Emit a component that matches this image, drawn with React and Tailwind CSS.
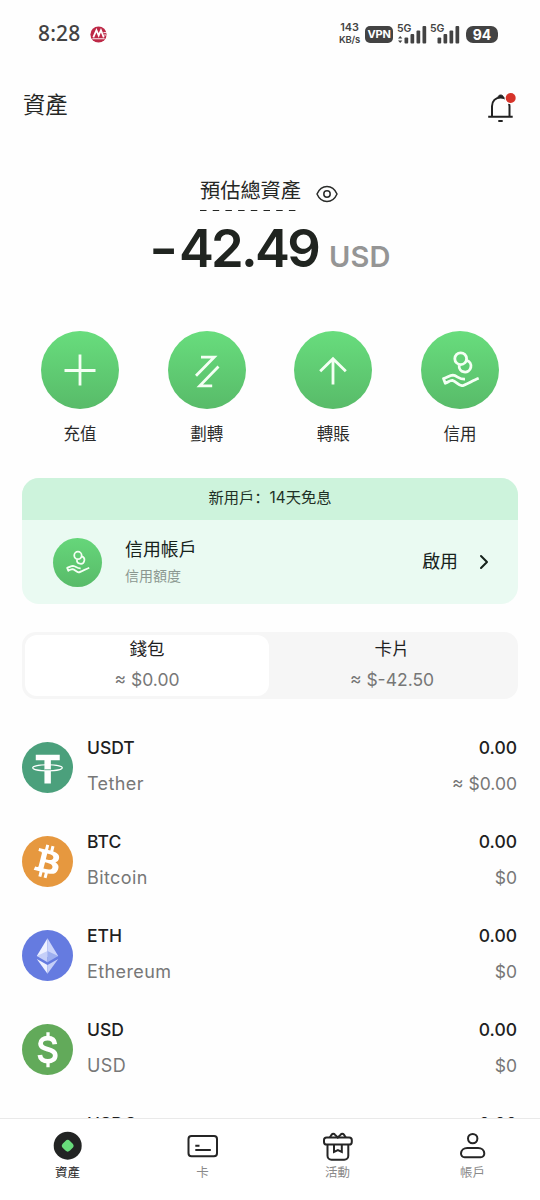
import { ChevronRight } from 'lucide-react'

const actions = [
  { label: '充值', icon: PlusIcon },
  { label: '劃轉', icon: TransferIcon },
  { label: '轉賬', icon: ArrowUpIcon },
  { label: '信用', icon: CreditIcon }
]

const assets = [
  { symbol: 'USDT', name: 'Tether', amount: '0.00', value: '≈ $0.00', icon: UsdtIcon },
  { symbol: 'BTC', name: 'Bitcoin', amount: '0.00', value: '$0', icon: BtcIcon },
  { symbol: 'ETH', name: 'Ethereum', amount: '0.00', value: '$0', icon: EthIcon },
  { symbol: 'USD', name: 'USD', amount: '0.00', value: '$0', icon: UsdIcon },
  { symbol: 'USDC', amount: '0.00', icon: UsdcIcon }
]

const navItems = [
  { label: '資產', icon: AssetsIcon, active: true },
  { label: '卡', icon: CardIcon },
  { label: '活動', icon: GiftIcon },
  { label: '帳戶', icon: UserIcon }
]

function PlusIcon() {
  return (
    <svg viewBox="0 0 78 78" className="size-full" fill="none" stroke="#f4fff4" strokeWidth="2.8">
      <path d="M39 23.5v31M23.5 39.5h31" />
    </svg>
  )
}

function TransferIcon() {
  return (
    <svg viewBox="0 0 78 78" className="size-full" fill="none" stroke="#f4fff4" strokeWidth="2.8">
      <path d="M33 26.2h13.2L28 44.700M50.500 35.600L31.800 54.800h12.400" />
    </svg>
  )
}

function ArrowUpIcon() {
  return (
    <svg viewBox="0 0 78 78" className="size-full" fill="none" stroke="#f4fff4" strokeWidth="2.8">
      <path d="M39 53.500V28M26.200 40.300L39 27.700l12.800 12.600" />
    </svg>
  )
}

function CreditIcon() {
  return (
    <svg viewBox="0 0 78 78" className="size-full" fill="none" stroke="#f4fff4" strokeWidth="2.8" strokeLinejoin="round">
      <circle cx="39.700" cy="27.700" r="5.900" />
      <path d="M45.600 29.400a5.900 5.900 0 1 1-7.400 4.900" />
      <path d="M44 48.200c-6.200.4-7.600-3.700-12.200-4-3 0-6 2.400-9.300 3.300l1.800 4.700c3-1 4.500-3 7-2.800 3.500.8 6 4.600 9.600 5.300 2.600-.2 11-5.200 16.800-7.400" />
    </svg>
  )
}

function UsdtIcon() {
  return (
    <svg viewBox="0 0 50 50" className="size-full">
      <circle cx="25" cy="25" r="25" fill="#4ba07c" />
      <path d="M13.500 12.500h23.500v5.500h-8.700v22.800h-6.300V18h-8.500z" fill="#fff" />
      <ellipse cx="25" cy="25.300" rx="14.500" ry="3" fill="none" stroke="#fff" strokeWidth="1.200" />
      <path d="M22 27.200h6.300" stroke="#4ba07c" strokeWidth=".8" />
    </svg>
  )
}

function BtcIcon() {
  return (
    <svg viewBox="0 0 32 32" className="size-full">
      <circle cx="16" cy="16" r="16" fill="#e6983f" />
      <path
        fill="#fff"
        transform="translate(-1.300 -1) scale(1.06)"
        d="M23.189 14.020c.314-2.096-1.283-3.223-3.465-3.975l.708-2.840-1.728-.430-.690 2.765c-.454-.114-.920-.220-1.385-.326l.695-2.783L15.596 6l-.708 2.839c-.376-.086-.746-.170-1.104-.260l.002-.009-2.384-.595-.460 1.846s1.283.294 1.256.312c.700.175.826.638.805 1.006l-.806 3.235c.048.012.110.030.180.057l-.183-.045-1.130 4.532c-.086.212-.303.531-.793.410.018.025-1.256-.313-1.256-.313l-.858 1.978 2.250.561c.418.105.828.215 1.231.318l-.715 2.872 1.727.430.708-2.840c.472.127.930.245 1.378.357l-.706 2.828 1.728.430.715-2.866c2.948.558 5.164.333 6.097-2.333.752-2.146-.037-3.385-1.588-4.192 1.130-.260 1.980-1.003 2.207-2.538zm-3.950 5.538c-.533 2.147-4.148.986-5.320.695l.950-3.805c1.172.293 4.929.872 4.370 3.110zm.535-5.569c-.487 1.953-3.495.960-4.470.717l.860-3.450c.975.243 4.118.696 3.610 2.733z"
      />
    </svg>
  )
}

function EthIcon() {
  return (
    <svg viewBox="0 0 50 50" className="size-full">
      <circle cx="25" cy="25" r="25" fill="#657be0" />
      <path d="M25 8v18.500l-10.500-1z" fill="#eef1ff" />
      <path d="M25 8v18.500l10.500-1z" fill="#ccd5fb" />
      <path d="M25 20.700l-10.500 4.800L25 31.500z" fill="#c5cff8" />
      <path d="M25 20.700l10.500 4.800L25 31.500z" fill="#9daff0" />
      <path d="M14.500 28.500L25 34.300v8.500z" fill="#eef1ff" />
      <path d="M35.500 28.500L25 34.300v8.500z" fill="#c5cff8" />
    </svg>
  )
}

function UsdIcon() {
  return (
    <svg viewBox="0 0 50 50" className="size-full">
      <circle cx="25" cy="25" r="25" fill="#62aa5a" />
      <g fill="none" stroke="#fff">
        <path d="M32.200 19.800c-.4-4-3.200-5.900-7-5.900-4.100 0-7 2-7 5.200 0 3.700 3.200 4.600 7 5.700 4.200 1.200 7.400 2.300 7.400 6 0 3.600-3.200 5.700-7.300 5.700-4.200 0-7.400-2.200-7.800-6.200" strokeWidth="4.600" />
        <path d="M25.500 8v5M25.500 37v5.500" strokeWidth="3.200" />
      </g>
    </svg>
  )
}

function UsdcIcon() {
  return (
    <svg viewBox="0 0 50 50" className="size-full">
      <circle cx="25" cy="25" r="25" fill="#9a9a9e" />
    </svg>
  )
}

function AssetsIcon() {
  return (
    <svg viewBox="0 0 32 32" className="size-8">
      <circle cx="15.700" cy="15.700" r="14" fill="#222423" />
      <rect x="10.700" y="10.700" width="10" height="10" rx="3.200" fill="#68dc7b" transform="rotate(45 15.700 15.700)" />
    </svg>
  )
}

function CardIcon() {
  return (
    <svg viewBox="0 0 32 32" className="size-8" fill="none" stroke="#252525" strokeWidth="2">
      <rect x="1.500" y="6" width="28.500" height="20.200" rx="3" />
      <path d="M8.300 15.800h4.200M8.300 20h15.500" />
    </svg>
  )
}

function GiftIcon() {
  return (
    <svg viewBox="0 0 32 32" className="size-8" fill="none" stroke="#252525" strokeWidth="2">
      <rect x="2" y="7.500" width="27.800" height="7" rx="2.600" />
      <path d="M5.500 14.600v11.200a4 4 0 0 0 4 4h12.800a4 4 0 0 0 4-4V14.600" />
      <path d="M7.800 7.500l1.900-2.900c.9-1.300 2.300-1.300 3.200 0l2.900 2.900 2.900-2.900c.9-1.300 2.300-1.300 3.200 0l1.900 2.900" />
      <path d="M12 14.600v7.400l3.900-1.800 3.900 1.800v-7.400" />
    </svg>
  )
}

function UserIcon() {
  return (
    <svg viewBox="0 0 32 32" className="size-8" fill="none" stroke="#252525" strokeWidth="2">
      <circle cx="15.700" cy="8.600" r="4.700" />
      <path d="M10.300 18h10.800c3.500 0 6 2.400 6.200 5.400.1 2.100-1.500 3.900-3.600 3.900H7.600c-2.100 0-3.700-1.800-3.600-3.900.2-3 2.800-5.400 6.300-5.400z" />
    </svg>
  )
}

function SignalBars({ data }) {
  return (
    <svg viewBox="0 0 32 24" className="h-6 w-8" fill="#434343">
      <text x="0" y="9.600" fontSize="10.500" fontWeight="600" fontFamily="Inter, sans-serif">5G</text>
      {data && <path d="M1 16.500L3.200 14l2.200 2.500zM1 18.500L3.200 21l2.200-2.500z" />}
      <rect x="7.500" y="15.500" width="3.700" height="6" rx="1" />
      <rect x="13.500" y="12" width="3.700" height="9.500" rx="1" />
      <rect x="19.500" y="8.500" width="3.700" height="13" rx="1" />
      <rect x="25.500" y="4" width="3.700" height="17.500" rx="1" />
    </svg>
  )
}

function StatusBar() {
  return (
    <div className="flex h-[68px] shrink-0 items-center pl-[38px] pr-[42px] text-[#434343]">
      <span className="-mt-px text-[21px] font-medium tracking-[0.200px] font-['Noto_Sans','Liberation_Sans',sans-serif]">8:28</span>
      <svg viewBox="0 0 18 18" className="ml-[9px] size-[17px]">
        <circle cx="9" cy="9" r="8.600" fill="#bd2846" />
        <path d="M3.500 12L6.800 4.500 9.200 10l2.400-5.500 3 7.500" fill="none" stroke="#fff" strokeWidth="1.900" />
        <path d="M2.500 13.500h13M14.200 7H17.500M15 9.500h2.500" stroke="#fff" strokeWidth="1" />
      </svg>
      <div className="ml-auto flex items-center">
        <div className="w-[23px] text-center font-semibold leading-[12px]">
          <div className="text-[10.800px] tracking-[-0.100px]">143</div>
          <div className="text-[9.500px] tracking-[-0.200px]">KB/s</div>
        </div>
        <div className="ml-1 flex h-[17px] w-[28px] items-center justify-center rounded-[5px] bg-[#434343] text-[11px] font-bold leading-[17px] tracking-[-0.200px] text-white">
          VPN
        </div>
        <div className="ml-1 flex">
          <SignalBars data />
          <span className="ml-px flex">
            <SignalBars />
          </span>
        </div>
        <div className="ml-1 flex h-[17px] w-[32px] items-center justify-center rounded-[7px] bg-[#434343] text-[14px] font-bold leading-[17px] text-white">
          94
        </div>
      </div>
    </div>
  )
}

function Header() {
  return (
    <div className="flex h-[74px] shrink-0 items-center justify-between px-[23px]">
      <h1 className="text-[22.300px] leading-none text-[#252725]">資產</h1>
      <svg viewBox="0 0 32 32" className="size-8 overflow-visible" fill="none" stroke="#222" strokeWidth="2">
        <path d="M7 27.500V17.300c0-5.300 3.500-8.800 8.700-8.800s8.800 3.500 8.800 8.800v10.200" />
        <path d="M3.200 27.700h24.500M13.300 32h4.400" />
        <path d="M13 8.500c0-3.300 5.400-3.300 5.400 0z" fill="#222" strokeWidth="1" />
        <circle cx="25.700" cy="9" r="6.200" fill="#fefefe" stroke="none" />
        <circle cx="25.700" cy="9" r="5" fill="#d63329" stroke="none" />
      </svg>
    </div>
  )
}

function Balance() {
  return (
    <div className="flex h-[189px] shrink-0 flex-col items-center pt-[37px]">
      <div className="flex h-[34px] items-start pr-[2px]">
        <div className="w-[101px]">
          <div className="h-[31px] whitespace-nowrap text-[20.200px] leading-[24px] text-[#252725]">預估總資產</div>
          <svg viewBox="0 0 96 2" className="h-[2px] w-[96px]">
            <path d="M0 .5h96" stroke="#252725" strokeWidth="1.100" strokeDasharray="6.500 6.200" />
          </svg>
        </div>
        <svg viewBox="0 0 22 18" className="ml-[15px] mt-[6px] h-[18px] w-[22px]" fill="none" stroke="#2a2c2a" strokeWidth="1.500">
          <path d="M1 9c2.200-5 5.600-7.500 10-7.500S18.800 4 21 9c-2.200 5-5.600 7.500-10 7.500S3.200 14 1 9z" />
          <circle cx="11" cy="9" r="3.200" />
        </svg>
      </div>
      <div className="-mt-[3px] flex items-baseline leading-[76px]">
        <span className="text-[52.500px] font-semibold tracking-[-2.800px] text-[#202420]">
          <span className="mr-[8px] inline-block origin-left scale-x-120">-</span>42.49
        </span>
        <span className="ml-[11px] text-[29px] font-semibold tracking-[0.200px] text-[#959595]">USD</span>
      </div>
    </div>
  )
}

function Actions() {
  return (
    <div className="flex h-[147px] shrink-0 justify-between px-[41px]">
      {actions.map(({ label, icon: Icon }) => (
        <div key={label} className="flex w-[78px] flex-col items-center">
          <div className="size-[78px] rounded-full bg-linear-to-b from-[#68dd7d] to-[#58bb69]">
            <Icon />
          </div>
          <span className="mt-[13px] text-[16.500px] leading-6 text-[#2b2b2b]">{label}</span>
        </div>
      ))}
    </div>
  )
}

function CreditBanner() {
  return (
    <div className="mx-[22px] h-[126px] shrink-0 overflow-hidden rounded-[17px] bg-[#eafaf2]">
      <div className="flex h-[42px] items-center justify-center bg-[#cdf3dc] pb-px text-[15.300px] text-[#1e3026]">
        <span lang="zh-Hans" className="font-['Inter','Noto_Sans_CJK_SC',sans-serif]">新用戶：14天免息</span>
      </div>
      <div className="flex h-[84px] items-center pl-[31px] pr-[22px]">
        <div className="size-[49px] rounded-full bg-linear-to-b from-[#66d67a] to-[#58bb69]">
          <CreditIcon />
        </div>
        <div className="-mt-px ml-[23px]">
          <div className="text-[17.900px] leading-[28px] text-[#17221c]">信用帳戶</div>
          <div className="text-[14px] leading-[23px] text-[#8b9790]">信用額度</div>
        </div>
        <span className="ml-auto mt-px text-[17.900px] text-[#17221c]">啟用</span>
        <ChevronRight className="ml-[14px] size-[24px] text-[#17221c]" strokeWidth={2} />
      </div>
    </div>
  )
}

function WalletTabs() {
  return (
    <div className="mx-[22px] mt-[28px] flex h-[67px] shrink-0 rounded-[14px] bg-[#f6f6f6] p-[3px] text-center">
      <div className="w-[244px] rounded-[12px] bg-white">
        <div className="text-[17.500px] leading-[28px] text-[#1f1f1f]">錢包</div>
        <div className="text-[17.500px] leading-[33px] text-[#777]">≈ $0.00</div>
      </div>
      <div className="flex-1">
        <div className="text-[17.500px] leading-[28px] text-[#1f1f1f]">卡片</div>
        <div className="text-[17.500px] leading-[33px] text-[#777]">≈ $-42.50</div>
      </div>
    </div>
  )
}

function AssetList() {
  return (
    <div className="min-h-0 flex-1 overflow-hidden pl-[22px] pr-[23px] pt-[22px]">
      {assets.map(({ symbol, name, amount, value, icon: Icon }) => (
        <div key={symbol} className="flex h-[93.800px] items-center">
          <div className="size-[51px]">
            <Icon />
          </div>
          <div className="-mt-[3px] ml-[14px]">
            <div className="h-9 text-[17.500px] font-medium leading-[36px] text-[#1f1f1f]">{symbol}</div>
            <div className="h-9 text-[18px] leading-[36px] tracking-[0.400px] text-[#777]">{name}</div>
          </div>
          <div className="-mt-[3px] ml-auto text-right">
            <div className="h-9 text-[17.500px] font-medium leading-[36px] text-[#1f1f1f]">{amount}</div>
            <div className="h-9 text-[17.500px] leading-[36px] text-[#777]">{value}</div>
          </div>
        </div>
      ))}
    </div>
  )
}

function BottomNav() {
  return (
    <div className="flex h-[82px] shrink-0 border-t border-[#e9e9e9] bg-white pt-[11px]">
      {navItems.map(({ label, icon: Icon, active }) => (
        <div key={label} className="flex flex-1 flex-col items-center">
          <Icon />
          <span className={`mt-px text-[12.500px] leading-5 ${active ? 'text-[#252525]' : 'text-[#8a8a8a]'}`}>{label}</span>
        </div>
      ))}
    </div>
  )
}

export default function App() {
  return (
    <div
      lang="zh-Hant"
      className="flex h-[1200px] w-[540px] flex-col overflow-hidden bg-[#fefefe] font-['Inter','Noto_Sans_CJK_TC',sans-serif]"
    >
      <StatusBar />
      <Header />
      <Balance />
      <Actions />
      <CreditBanner />
      <WalletTabs />
      <AssetList />
      <BottomNav />
    </div>
  )
}
